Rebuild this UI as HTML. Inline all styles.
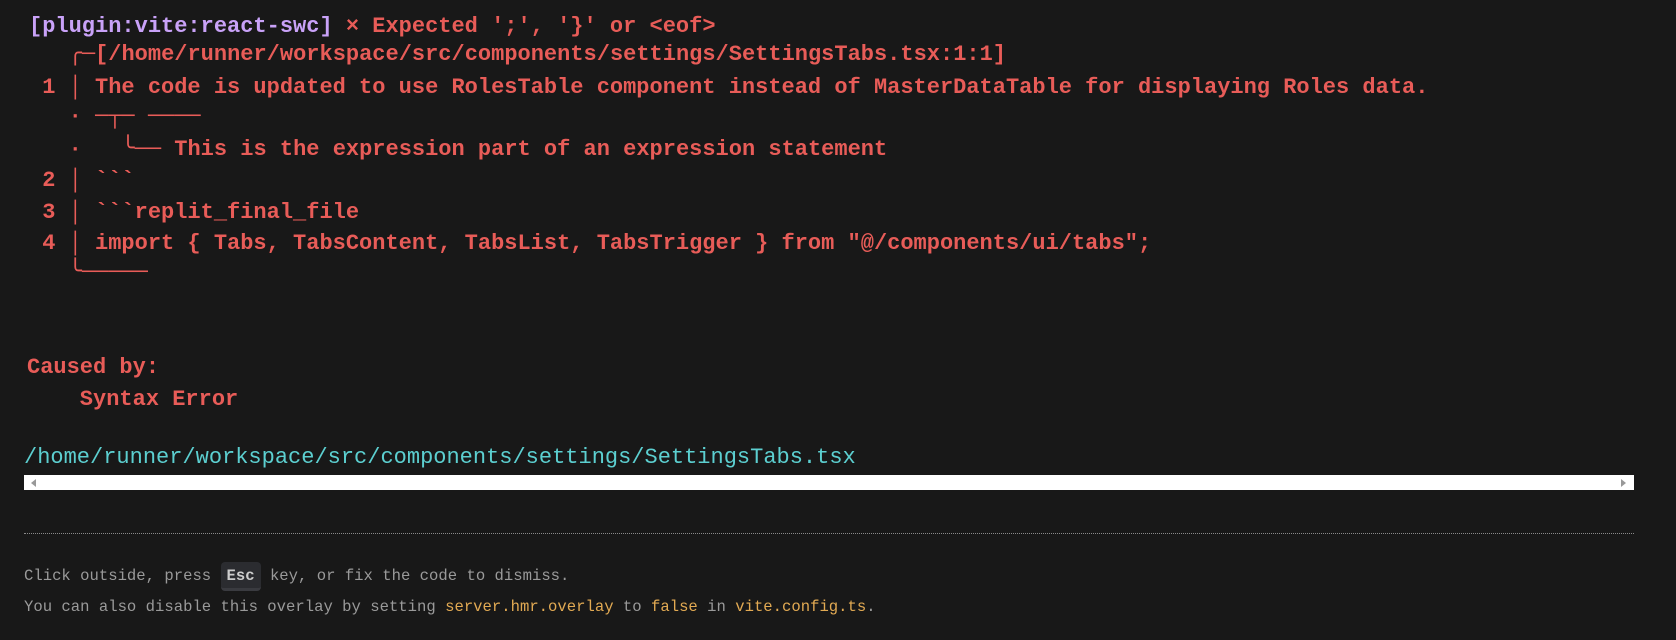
<!DOCTYPE html>
<html><head><meta charset="utf-8"><style>
html,body{margin:0;padding:0;background:#181818;width:1676px;height:640px;overflow:hidden}
.m{position:absolute;font-family:"Liberation Mono",monospace;white-space:pre;font-size:22px;line-height:31px;font-weight:bold;color:#e85c58;left:29px}
.p{color:#c9a2f8}
.c{color:#5ccfd0;font-weight:normal}
.f{position:absolute;left:24px;font-family:"Liberation Mono",monospace;white-space:pre;font-size:15.6px;line-height:20px;color:#9a9a9a}
.y{color:#e2aa53}
.kbd{display:inline-block;background:#2b2c30;border-radius:4px;border-bottom:3px solid #3a3b40;color:#ccc;font-weight:bold;padding:4px 6px 2px;line-height:20px}
</style></head><body>
<div class="m" style="top:11px"><span class="p">[plugin:vite:react-swc]</span> × Expected ';', '}' or &lt;eof&gt;</div>
<div class="m" style="top:39px">   ╭─[/home/runner/workspace/src/components/settings/SettingsTabs.tsx:1:1]</div>
<div class="m" style="top:72px"> 1 │ The code is updated to use RolesTable component instead of MasterDataTable for displaying Roles data.</div>
<div class="m" style="top:101px">   · ─┬─ ────</div>
<div class="m" style="top:134px">   ·   ╰── This is the expression part of an expression statement</div>
<div class="m" style="top:165px"> 2 │ &#96;&#96;&#96;</div>
<div class="m" style="top:197px"> 3 │ &#96;&#96;&#96;replit_final_file</div>
<div class="m" style="top:228px"> 4 │ import { Tabs, TabsContent, TabsList, TabsTrigger } from "@/components/ui/tabs";</div>
<div class="m" style="top:257px">   ╰─────</div>
<div class="m" style="top:352px;left:27px">Caused by:</div>
<div class="m" style="top:384px;left:27px">    Syntax Error</div>
<div class="m c" style="top:442px;left:24px">/home/runner/workspace/src/components/settings/SettingsTabs.tsx</div>
<div style="position:absolute;left:24px;top:475px;width:1610px;height:15px;background:#fff">
<div style="position:absolute;left:7px;top:4px;width:0;height:0;border-top:4px solid transparent;border-bottom:4px solid transparent;border-right:5px solid #999"></div>
<div style="position:absolute;right:8px;top:4px;width:0;height:0;border-top:4px solid transparent;border-bottom:4px solid transparent;border-left:5px solid #999"></div>
</div>
<div style="position:absolute;left:24px;top:533px;width:1610px;border-top:1px dotted #8a8a8a"></div>
<div class="f" style="top:562px">Click outside, press <span class="kbd">Esc</span> key, or fix the code to dismiss.</div>
<div class="f" style="top:597px">You can also disable this overlay by setting <span class="y">server.hmr.overlay</span> to <span class="y">false</span> in <span class="y">vite.config.ts</span>.</div>
</body></html>
